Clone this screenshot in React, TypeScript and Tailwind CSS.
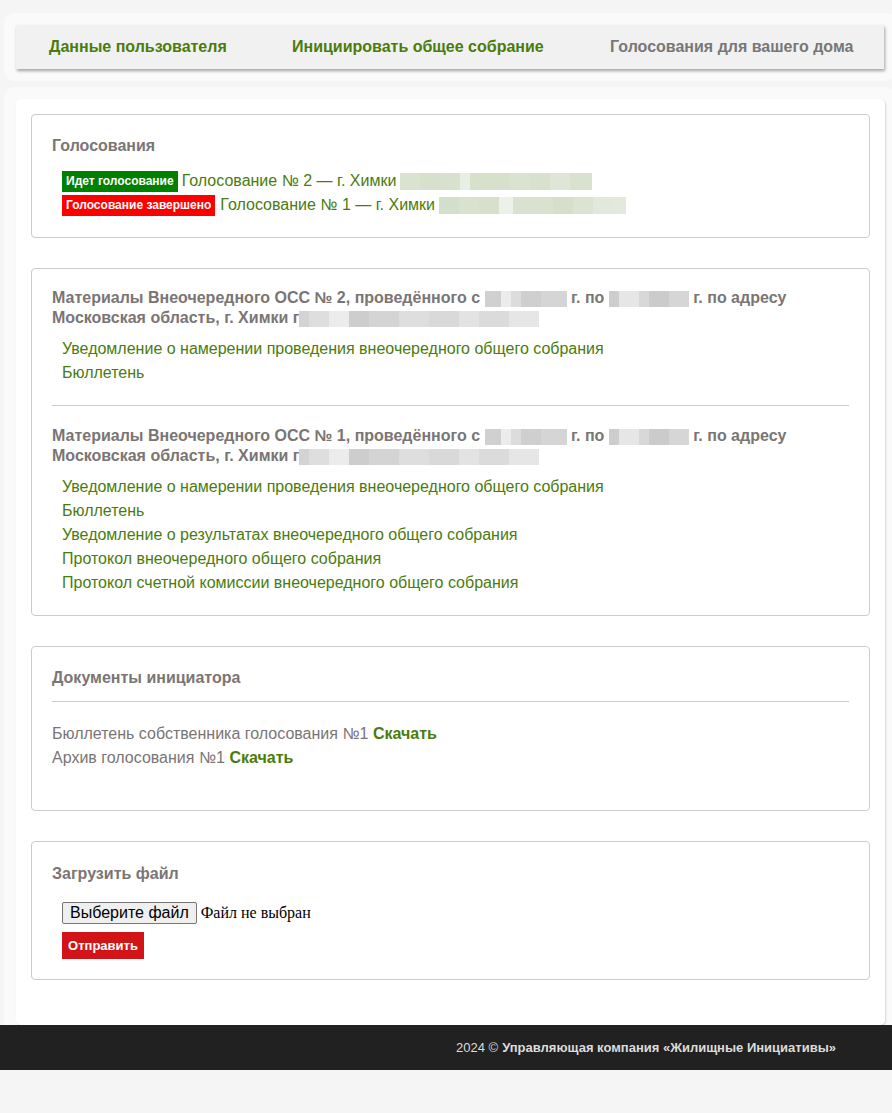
import React from "react";

const GREEN = "text-[#4a7c0c]";
const GRAY = "text-[#7a7575]";

const NAV = [
  { label: "Данные пользователя", active: false, w: "w-[243px]" },
  { label: "Инициировать общее собрание", active: false, w: "w-[318px]" },
  { label: "Голосования для вашего дома", active: true, w: "w-[260px]" },
];

// pixelated blur imitation of hidden address parts
function Blur({ cells, h = 16 }: { cells: [number, string][]; h?: number }) {
  return (
    <span className="inline-flex align-middle" style={{ height: h }}>
      {cells.map(([w, c], i) => (
        <span key={i} style={{ width: w, background: c, height: h }} />
      ))}
    </span>
  );
}

const greenBlur1: [number, string][] = [
  [20, "#d9e3cf"], [20, "#d6e0cb"], [20, "#d8e1cd"], [10, "#e9eee4"], [40, "#d6e0cb"],
  [20, "#dae3cf"], [20, "#d8e1cd"], [20, "#dfe6d7"], [22, "#d9e2ce"],
];
const greenBlur2: [number, string][] = [
  [20, "#d3decb"], [20, "#d9e2cd"], [20, "#d7e0cb"], [14, "#eef1ea"], [40, "#d9e2ce"],
  [20, "#d5dfca"], [20, "#dbe3d1"], [20, "#e2e8db"], [13, "#e4e9de"],
];
const grayA: [number, string][] = [
  [16, "#d0d0d0"], [10, "#ececec"], [10, "#dcdcdc"], [20, "#cfcfcf"], [26, "#d5d5d5"],
];
const grayB: [number, string][] = [
  [10, "#cdcdcd"], [20, "#e6e6e6"], [10, "#d8d8d8"], [20, "#cbcbcb"], [20, "#d6d6d6"],
];
const grayC: [number, string][] = [
  [10, "#d3d3d3"], [20, "#dedede"], [20, "#ececec"], [20, "#cdcdcd"], [30, "#d4d4d4"],
  [30, "#dedede"], [30, "#d9d9d9"], [20, "#e3e3e3"], [30, "#dbdbdb"], [30, "#e6e6e6"],
];

function Card({ children, className = "" }: { children: React.ReactNode; className?: string }) {
  return (
    <div className={`border border-[#cccccc] rounded-[4px] bg-white px-[20px] ${className}`}>
      {children}
    </div>
  );
}

function Title({ children }: { children: React.ReactNode }) {
  return <div className={`text-[16px] leading-[20px] font-bold ${GRAY}`}>{children}</div>;
}

function LinkList({ items }: { items: string[] }) {
  return (
    <div className="mt-[9px] pl-[10px]">
      {items.map((t) => (
        <div key={t} className={`text-[16px] leading-[24px] ${GREEN}`}>{t}</div>
      ))}
    </div>
  );
}

export default function App() {
  return (
    <div
      className="min-h-[1113px] bg-[#f5f5f5] overflow-hidden"
      style={{ fontFamily: '"Liberation Sans", Arial, sans-serif' }}
    >
      <div className="h-[13px]" />
      <div className="ml-[4px] w-[892px] rounded-[10px] bg-[#fafafa] p-[12px]">
        <nav className="w-[868px] h-[44px] bg-[#f1f1f1] shadow-[1px_2px_3px_rgba(0,0,0,0.35)] flex items-center pl-[33px]">
          {NAV.map((n) => (
            <span
              key={n.label}
              className={`${n.w} shrink-0 whitespace-nowrap text-[16px] font-bold ${n.active ? "text-[#777777]" : GREEN}`}
            >
              {n.label}
            </span>
          ))}
        </nav>
      </div>

      <div className="ml-[4px] w-[892px] mt-[6px] rounded-t-[10px] bg-[#fafafa] px-[12px] pt-[12px]">
        <main className="w-[869px] bg-white rounded-[5px] shadow-[1px_1px_2px_rgba(0,0,0,0.15)] pt-[15px] px-[15px] pb-[45px] flex flex-col gap-[30px]">
          <Card className="pt-[21px] pb-[20px]">
            <Title>Голосования</Title>
            <div className="mt-[13px] pl-[10px]">
              <div className="h-[24px] flex items-center">
                <span className="bg-[#008000] text-white text-[12px] font-bold h-[21px] px-[4px] flex items-center">
                  Идет голосование
                </span>
                <span className={`ml-[4px] text-[16px] ${GREEN}`}>Голосование № 2 — г. Химки</span>
                <span className="ml-[4px]"><Blur cells={greenBlur1} h={17} /></span>
              </div>
              <div className="h-[24px] flex items-center">
                <span className="bg-[#ff0000] text-white text-[12px] font-bold h-[21px] px-[4px] flex items-center">
                  Голосование завершено
                </span>
                <span className={`ml-[5px] text-[16px] ${GREEN}`}>Голосование № 1 — г. Химки</span>
                <span className="ml-[4px]"><Blur cells={greenBlur2} h={17} /></span>
              </div>
            </div>
          </Card>

          <Card className="pt-[19px] pb-[20px]">
            <Title>
              Материалы Внеочередного ОСС № 2, проведённого с <Blur cells={grayA} /> г. по{" "}
              <Blur cells={grayB} /> г. по адресу
              <br />
              Московская область, г. Химки г<Blur cells={grayC} />
            </Title>
            <LinkList
              items={["Уведомление о намерении проведения внеочередного общего собрания", "Бюллетень"]}
            />
            <div className="h-px bg-[#cccccc] mt-[20px] mb-[20px]" />
            <Title>
              Материалы Внеочередного ОСС № 1, проведённого с <Blur cells={grayA} /> г. по{" "}
              <Blur cells={grayB} /> г. по адресу
              <br />
              Московская область, г. Химки г<Blur cells={grayC} />
            </Title>
            <LinkList
              items={[
                "Уведомление о намерении проведения внеочередного общего собрания",
                "Бюллетень",
                "Уведомление о результатах внеочередного общего собрания",
                "Протокол внеочередного общего собрания",
                "Протокол счетной комиссии внеочередного общего собрания",
              ]}
            />
          </Card>

          <Card className="pt-[21px] pb-[40px]">
            <Title>Документы инициатора</Title>
            <div className="h-px bg-[#cccccc] mt-[13px] mb-[20px]" />
            <div className={`text-[16px] leading-[24px] ${GRAY}`}>
              Бюллетень собственника голосования №1 <span className={`font-bold ${GREEN}`}>Скачать</span>
            </div>
            <div className={`text-[16px] leading-[24px] ${GRAY}`}>
              Архив голосования №1 <span className={`font-bold ${GREEN}`}>Скачать</span>
            </div>
          </Card>

          <Card className="pt-[22px] pb-[20px]">
            <Title>Загрузить файл</Title>
            <div className="pl-[10px] mt-[18px]">
              <div className="flex items-center h-[22px]">
                <button className="h-[22px] px-[7px] bg-[#efefef] border border-[#767676] rounded-[2px] text-[16px] leading-[18px] text-black">
                  Выберите файл
                </button>
                <span
                  className="ml-[4px] text-[16px] text-black"
                  style={{ fontFamily: '"Liberation Serif", "Times New Roman", serif' }}
                >
                  Файл не выбран
                </span>
              </div>
              <button className="mt-[8px] h-[27px] w-[82px] bg-[#d21419] text-white text-[13px] font-bold">
                Отправить
              </button>
            </div>
          </Card>
        </main>
      </div>

      <footer className="h-[45px] bg-[#212121] flex items-center justify-end pr-[56px] text-[13px] text-[#dcdcdc]">
        <span>2024 © </span>
        <span className="font-bold ml-[4px]">Управляющая компания «Жилищные Инициативы»</span>
      </footer>
    </div>
  );
}
